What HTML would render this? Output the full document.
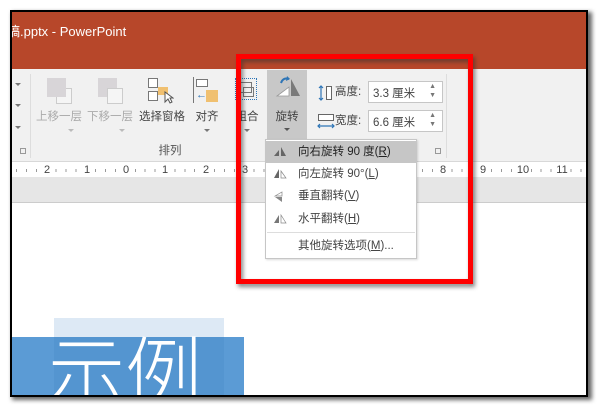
<!DOCTYPE html>
<html><head><meta charset="utf-8"><style>
*{margin:0;padding:0;box-sizing:border-box}
body{width:600px;height:409px;background:#fff;position:relative;overflow:hidden;font-family:"Liberation Sans","Noto Sans CJK SC",sans-serif}
.a{position:absolute}
.lbl{position:absolute;font-size:11.5px;color:#444;white-space:nowrap;transform:translateX(-50%)}
.dis{color:#aaa}
.arr{position:absolute;width:0;height:0;border-left:3px solid transparent;border-right:3px solid transparent;border-top:3px solid #777}
.num{position:absolute;top:163px;font-size:11px;color:#444;transform:translateX(-50%)}
.mi{position:absolute;left:0;width:151px;height:22px;font-size:11.5px;color:#444;line-height:22px;padding-left:32px;white-space:nowrap}
</style></head><body>
<div class="a" style="left:12px;top:12px;width:580px;height:388px;background:#666;filter:blur(2px)"></div>
<div class="a" style="left:10px;top:10px;width:578px;height:387px;background:#fff;border:2px solid #000;overflow:hidden">
 <div class="a" style="left:0;top:0;width:576px;height:57px;background:#b7472a"></div>
 <div class="a" style="left:-5px;top:9px;color:#fff;font-size:13px">稿.pptx - PowerPoint</div>
 <div class="a" style="left:0;top:57px;width:576px;height:93px;background:#f1f1f1;border-bottom:1px solid #d8d8d8"></div>
 <div class="arr" style="left:3px;top:71px"></div>
 <div class="arr" style="left:3px;top:92px"></div>
 <div class="arr" style="left:3px;top:114px"></div>
 <div class="a" style="left:8px;top:136px;width:6px;height:6px;border:1px solid #999"></div>
 <div class="a" style="left:18px;top:62px;width:1px;height:84px;background:#ddd"></div>
 <div class="a" style="left:434px;top:62px;width:1px;height:84px;background:#ddd"></div>
 <div class="a" style="left:423px;top:136px;width:6px;height:6px;border:1px solid #999"></div>
 <div class="a" style="left:35px;top:66px;width:19px;height:19px;background:#d8d5d8"></div>
 <div class="a" style="left:44px;top:76px;width:16px;height:16px;border:1px solid #ccc;background:#f5f5f5"></div>
 <div class="a" style="left:44px;top:76px;width:10px;height:9px;background:#d8d5d8"></div>
 <div class="lbl dis" style="left:47px;top:96px">上移一层</div>
 <div class="arr" style="left:56px;top:117px;border-top-color:#bbb"></div>
 <div class="a" style="left:86px;top:66px;width:19px;height:19px;background:#d8d5d8"></div>
 <div class="a" style="left:95px;top:76px;width:16px;height:16px;border:1px solid #ccc;background:#f5f5f5"></div>
 <div class="lbl dis" style="left:98px;top:96px">下移一层</div>
 <div class="arr" style="left:107px;top:117px;border-top-color:#bbb"></div>
 <div class="a" style="left:136px;top:66px;width:10px;height:10px;border:1px solid #777;background:#fff"></div>
 <div class="a" style="left:136px;top:79px;width:10px;height:10px;border:1px solid #777;background:#fff"></div>
 <div class="a" style="left:146px;top:75px;width:10px;height:8px;background:#f0c070"></div>
 <svg class="a" style="left:152px;top:79px" width="10" height="14"><path d="M1 1 L1 11 L4 8 L6 12 L8 11 L6 7 L9 7 Z" fill="#fff" stroke="#555" stroke-width="1"/></svg>
 <div class="lbl" style="left:150px;top:96px">选择窗格</div>
 <div class="a" style="left:181px;top:65px;width:1px;height:26px;background:#777"></div>
 <div class="a" style="left:184px;top:67px;width:12px;height:8px;border:1px solid #777;background:#fff"></div>
 <div class="a" style="left:194px;top:78px;width:12px;height:12px;background:#f0c070"></div>
 <div class="a" style="left:184px;top:77px;color:#2e75b6;font-size:11px;font-weight:bold">←</div>
 <div class="lbl" style="left:195px;top:96px">对齐</div>
 <div class="arr" style="left:192px;top:117px"></div>
 <div class="a" style="left:223px;top:66px;width:22px;height:22px;border:1px dotted #2e75b6"></div>
 <div class="a" style="left:227px;top:70px;width:13px;height:11px;border:1px solid #777"></div>
 <div class="a" style="left:231px;top:75px;width:11px;height:10px;border:1px solid #777"></div>
 <div class="lbl" style="left:235px;top:96px">组合</div>
 <div class="arr" style="left:232px;top:117px"></div>
 <div class="a" style="left:255px;top:58px;width:40px;height:71px;background:#c8c8c8"></div>
 <svg class="a" style="left:263px;top:63px" width="26" height="24"><path d="M6 8 Q8 2 14 4" fill="none" stroke="#2e75b6" stroke-width="2"/><path d="M12 1 L15 4 L11 6 Z" fill="#2e75b6"/><path d="M2 21 L14 12 L14 21 Z" fill="#fff" stroke="#999" stroke-width="0.8"/><path d="M16 21 L16 4 L25 21 Z" fill="#7a7a7a"/></svg>
 <div class="lbl" style="left:275px;top:96px">旋转</div>
 <div class="arr" style="left:272px;top:116px;border-top-color:#555"></div>
 <div class="lbl" style="left:158px;top:130px;color:#555">排列</div>
 <svg class="a" style="left:305px;top:72px" width="18" height="18"><path d="M4 2 V16 M2 4 L4 2 L6 4 M2 14 L4 16 L6 14" stroke="#2e75b6" fill="none" stroke-width="1.2"/><rect x="9.5" y="2.5" width="5" height="13" fill="#fff" stroke="#666"/></svg>
 <div class="a" style="left:323px;top:71px;font-size:11.5px;color:#444">高度:</div>
 <div class="a" style="left:356px;top:69px;width:75px;height:22px;border:1px solid #c6c6c6;background:#fff;font-size:11.5px;color:#444;padding:3px 4px">3.3 厘米<span style="position:absolute;right:6px;top:0;font-size:7px;line-height:9px;color:#777">▲<br>▼</span></div>
 <svg class="a" style="left:304px;top:100px" width="20" height="18"><rect x="2.5" y="2.5" width="15" height="6" fill="#fff" stroke="#666"/><path d="M2 14 H18 M4 12 L2 14 L4 16 M16 12 L18 14 L16 16" stroke="#2e75b6" fill="none" stroke-width="1.2"/></svg>
 <div class="a" style="left:323px;top:100px;font-size:11.5px;color:#444">宽度:</div>
 <div class="a" style="left:356px;top:98px;width:75px;height:22px;border:1px solid #c6c6c6;background:#fff;font-size:11.5px;color:#444;padding:3px 4px">6.6 厘米<span style="position:absolute;right:6px;top:0;font-size:7px;line-height:9px;color:#777">▲<br>▼</span></div>
 <div class="a" style="left:0;top:152px;width:576px;height:13px;background:#fff"></div>
 <div class="a" style="left:0;top:152px;width:576px;height:13px;background:repeating-linear-gradient(90deg,transparent 0,transparent 4px,#999 4px,#999 5px,transparent 5px,transparent 9.9px);clip-path:inset(5px 0 5px 0)"></div>
 <div class="num" style="left:35px;top:152px;background:#fff">2</div>
 <div class="num" style="left:75px;top:152px;background:#fff">1</div>
 <div class="num" style="left:114px;top:152px;background:#fff">0</div>
 <div class="num" style="left:153px;top:152px;background:#fff">1</div>
 <div class="num" style="left:194px;top:152px;background:#fff">2</div>
 <div class="num" style="left:233px;top:152px;background:#fff">3</div>
 <div class="num" style="left:431px;top:152px;background:#fff">8</div>
 <div class="num" style="left:471px;top:152px;background:#fff">9</div>
 <div class="num" style="left:511px;top:152px;background:#fff">10</div>
 <div class="num" style="left:550px;top:152px;background:#fff">11</div>
 <div class="a" style="left:0;top:165px;width:576px;height:26px;background:#e6e6e6;border-bottom:1px solid #ccc"></div>
 <div class="a" style="left:42px;top:306px;width:170px;height:90px;background:#dde9f5"></div>
 <div class="a" style="left:0;top:325px;width:232px;height:70px;background:#5b9bd5"></div>
 <div class="a" style="left:42px;top:325px;width:170px;height:70px;background:#4e8fcc;opacity:.5"></div>
 <div class="a" style="left:36px;top:318px;font-size:77px;color:#fff;font-family:'Noto Sans CJK SC',sans-serif;font-weight:300;line-height:1">示例</div>
</div>
<div class="a" style="left:238px;top:57px;width:237px;height:230px;border:5px solid #333;filter:blur(2px);opacity:.6"></div>
<div class="a" style="left:236px;top:54px;width:237px;height:230px;border:5px solid #f00"></div>
<div class="a" style="left:265px;top:139px;width:152px;height:120px;background:#fff;border:1px solid #c6c6c6;box-shadow:1px 1px 2px rgba(0,0,0,.15)">
 <div class="mi" style="top:1px;background:#c6c6c6;color:#222">向右旋转 90 度(<u>R</u>)</div>
 <div class="mi" style="top:23px">向左旋转 90°(<u>L</u>)</div>
 <div class="mi" style="top:45px">垂直翻转(<u>V</u>)</div>
 <div class="mi" style="top:68px">水平翻转(<u>H</u>)</div>
 <div class="a" style="left:1px;top:92px;width:148px;height:1px;background:#ddd"></div>
 <div class="mi" style="top:95px">其他旋转选项(<u>M</u>)...</div>
 <svg class="a" style="left:6px;top:5px" width="16" height="100"><path d="M2 11 L7 5 L7 11Z M9 2 L9 11 L14 11Z" fill="#666"/><path d="M2 33 L7 24 L7 33Z" fill="#666"/><path d="M9 26 L14 33 L9 33Z" fill="#fff" stroke="#888" stroke-width=".7"/><path d="M3 51 L10 47 L10 51Z" fill="#fff" stroke="#888" stroke-width=".7"/><path d="M3 52 L10 52 L10 57Z" fill="#888"/><path d="M2 78 L7 70 L7 78Z" fill="#777"/><path d="M9 70 L14 78 L9 78Z" fill="#fff" stroke="#888" stroke-width=".7"/></svg>
</div>
</body></html>
